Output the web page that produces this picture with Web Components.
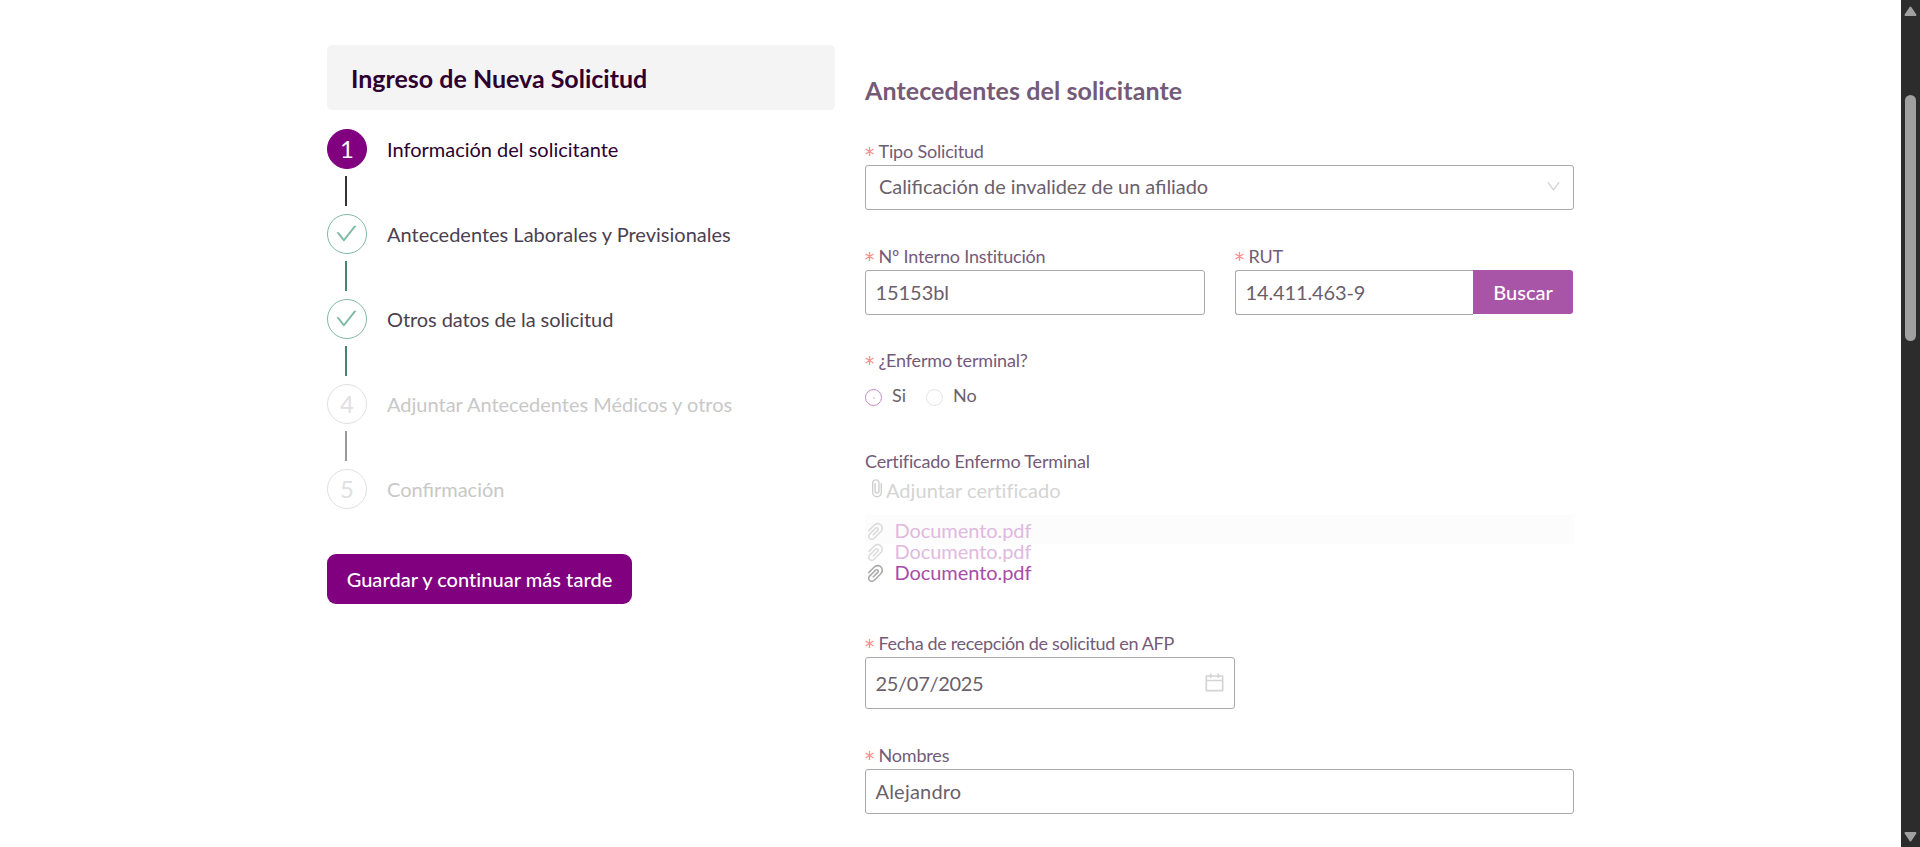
<!DOCTYPE html>
<html lang="es">
<head>
<meta charset="utf-8">
<title>Ingreso de Nueva Solicitud</title>
<style>
html,body{margin:0;height:100%;overflow:hidden;background:#fff}
body{font-family:Lato,sans-serif;font-size:20px;line-height:24px;color:#6b5f6b;font-variant-ligatures:none}
.fi{font-feature-settings:"liga" 1}
</style>
</head>
<body>
<app-page>
  <step-panel slot="aside" heading="Ingreso de Nueva Solicitud">
    <step-item n="1" state="active">Información del solicitante</step-item>
    <step-item n="2" state="done">Antecedentes Laborales y Previsionales</step-item>
    <step-item n="3" state="done" style="letter-spacing:-.08px">Otros datos de la solicitud</step-item>
    <step-item class="fi" n="4" state="wait">Adjuntar Antecedentes Médicos y otros</step-item>
    <step-item class="fi" n="5" state="wait" last>Confirmación</step-item>
    <save-button slot="action">Guardar y continuar más tarde</save-button>
  </step-panel>
  <form-section heading="Antecedentes del solicitante">
    <form-field label="Tipo Solicitud" required style="margin-bottom:35px"><text-box class="fi" icon="down" style="--pad:13px;--pb:4px;letter-spacing:-.06px">Calificación de invalidez de un afiliado</text-box></form-field>
    <form-row style="margin-bottom:34px">
      <form-field label="Nº Interno Institución" required><text-box style="letter-spacing:-.06px">15153bl</text-box></form-field>
      <form-field label="RUT" required><search-box action="Buscar">14.411.463-9</search-box></form-field>
    </form-row>
    <form-field label="¿Enfermo terminal?" required style="margin-bottom:41px"><radio-group><radio-option tone="on">Si</radio-option><radio-option>No</radio-option></radio-group></form-field>
    <form-field label="Certificado Enfermo Terminal" style="margin-bottom:51px">
      <attach-list label="Adjuntar certificado"><file-item faded boxed>Documento.pdf</file-item><file-item faded>Documento.pdf</file-item><file-item>Documento.pdf</file-item></attach-list>
    </form-field>
    <form-field label="Fecha de recepción de solicitud en AFP" required style="width:370px;margin-bottom:35px;--ls:-.34px"><text-box icon="calendar" style="--h:52px;--pb:0px;letter-spacing:-.3px">25/07/2025</text-box></form-field>
    <form-field label="Nombres" required><text-box style="letter-spacing:.2px">Alejandro</text-box></form-field>
  </form-section>
  <scroll-rail slot="rail"></scroll-rail>
</app-page>
<script>
const ICONS = {
  check:'M912 190h-69.9c-9.8 0-19.1 4.5-25.1 12.2L404.7 724.5 207 474a32 32 0 00-25.1-12.2H112c-6.7 0-10.4 7.7-6.3 12.9l273.9 347c12.8 16.2 37.4 16.2 50.3 0l488.4-618.9c4.1-5.1.4-12.8-6.3-12.8z',
  down:'M884 256h-75c-5.1 0-9.9 2.5-12.9 6.6L512 654.2 227.9 262.6c-3-4.1-7.8-6.6-12.9-6.6h-75c-6.5 0-10.3 7.4-6.5 12.7l352.6 486.1c12.8 17.6 39 17.6 51.7 0l352.6-486.1c3.9-5.3.1-12.7-6.4-12.7z',
  calendar:'M880 184H712v-64c0-4.4-3.6-8-8-8h-56c-4.4 0-8 3.6-8 8v64H384v-64c0-4.4-3.6-8-8-8h-56c-4.4 0-8 3.6-8 8v64H144c-17.7 0-32 14.3-32 32v664c0 17.7 14.3 32 32 32h736c17.7 0 32-14.3 32-32V216c0-17.7-14.3-32-32-32zm-40 656H184V460h656v380zM184 392V256h128v48c0 4.4 3.6 8 8 8h56c4.4 0 8-3.6 8-8v-48h256v48c0 4.4 3.6 8 8 8h56c4.4 0 8-3.6 8-8v-48h128v136H184z',
  clip:'M779.3 196.6c-94.2-94.2-247.6-94.2-341.7 0l-261 260.8c-1.7 1.7-2.6 4-2.6 6.4s.9 4.7 2.6 6.4l36.9 36.9a9 9 0 0012.7 0l261-260.8c32.4-32.4 75.5-50.2 121.3-50.2s88.9 17.8 121.2 50.2c32.4 32.4 50.2 75.5 50.2 121.2 0 45.8-17.8 88.8-50.2 121.2l-266 265.9-43.1 43.1c-40.3 40.3-105.8 40.3-146.1 0-19.5-19.5-30.2-45.4-30.2-73s10.7-53.5 30.2-73l263.9-263.8c6.7-6.6 15.5-10.3 24.9-10.3h.1c9.4 0 18.1 3.7 24.7 10.3 6.7 6.7 10.3 15.5 10.3 24.9 0 9.3-3.7 18.1-10.3 24.7L372.4 653c-1.7 1.7-2.6 4-2.6 6.4s.9 4.7 2.6 6.4l36.9 36.9a9 9 0 0012.7 0l215.6-215.6c19.9-19.9 30.8-46.3 30.8-74.4s-11-54.6-30.8-74.4c-41.1-41.1-107.9-41-149 0L463 364 224.8 602.1A172.22 172.22 0 00174 724.8c0 46.3 18.1 89.8 50.8 122.5 33.9 33.8 78.3 50.7 122.7 50.7 44.4 0 88.8-16.9 122.6-50.7l309.2-309C824.8 492.7 850 432 850 367.5c.1-64.6-25.1-125.3-70.7-170.9z'
};
const icon = (n, s) => `<svg class="icon" width="${s}" height="${s}" viewBox="0 0 1024 1024" fill="currentColor"><path d="${ICONS[n]}"/></svg>`;
const define = (name, render) => customElements.define(name, class extends HTMLElement {
  connectedCallback() {
    if (this.shadowRoot) return;
    this.attachShadow({mode:'open'}).innerHTML = render(this);
  }
});

define('app-page', () => `<style>
:host{display:grid;grid-template-columns:508px 30px 709px 1fr 19px;padding-left:327px;height:847px;box-sizing:border-box}
.a{grid-column:1;padding-top:45px}.m{grid-column:3;padding-top:75px}.r{grid-column:5}
</style><div class="a"><slot name="aside"></slot></div><div class="m"><slot></slot></div><div class="r"><slot name="rail"></slot></div>`);

define('step-panel', el => `<style>
:host{display:block}
h1{margin:0 0 19px;height:65px;box-sizing:border-box;padding:18px 24px 0;background:#f4f4f4;border-radius:5px;font-size:25px;line-height:30px;font-weight:700;color:#2d0030}
.b{margin-top:45px}
</style><h1>${el.getAttribute('heading')}</h1><slot></slot><div class="b"><slot name="action"></slot></div>`);

define('step-item', el => {
  const s = el.getAttribute('state');
  const c = {active:['#800080','#2d0030','#333'],done:['#7fb9a5','#4b3f50','#438570'],wait:['#e0e0e0','#c8c8c8','#999']}[s];
  return `<style>
:host{display:grid;grid-template-columns:40px 1fr;column-gap:20px}
.c{box-sizing:border-box;width:40px;height:40px;border:1px solid ${c[0]};border-radius:50%;display:flex;align-items:center;justify-content:center;font-size:24px;color:${s==='active'?'#fff':c[0]};background:${s==='active'?c[0]:'#fff'}}
.t{padding-top:8px;color:${c[1]};white-space:nowrap}
.l{width:2px;height:30px;margin:7px 0 8px 18px;background:${c[2]}}
.c .icon{margin:-1px 1px 0 0}
</style><div class="c">${s==='done'?icon('check',25):el.getAttribute('n')}</div><div class="t"><slot></slot></div>${el.hasAttribute('last')?'':'<div class="l"></div>'}`;
});

define('save-button', () => `<style>
:host{display:block}
button{display:block;width:305px;height:50px;border:0;border-radius:9px;padding:0;background:#800080;color:#fff;font:500 20px/24px Lato,sans-serif;font-variant-ligatures:none;letter-spacing:.03px;white-space:nowrap}
</style><button><slot></slot></button>`);

define('form-section', el => `<style>
:host{display:block}
h2{margin:0 0 35px;font-size:25px;line-height:30px;font-weight:700;letter-spacing:.09px;color:#755a78}
</style><h2>${el.getAttribute('heading')}</h2><slot></slot>`);

define('form-row', () => `<style>:host{display:grid;grid-template-columns:340px 339px;column-gap:30px}</style><slot></slot>`);

define('form-field', el => `<style>
:host{display:block}
.l{display:flex;align-items:center;height:22px;margin-bottom:3px;font-size:18px;line-height:22px;letter-spacing:var(--ls,-.18px);color:#755a78;white-space:nowrap}
.s{width:9px;height:9px;margin:1px 4.5px 0 0;stroke:#ff8f8f;stroke-width:1.3;fill:none}
</style><div class="l">${el.hasAttribute('required')?'<svg class="s" viewBox="0 0 9 9"><path d="M4.5 0v9M.5 2l8 5M8.5 2l-8 5"/></svg>':''}<span>${el.getAttribute('label')}</span></div><slot></slot>`);

const BOX = `box-sizing:border-box;height:var(--h,45px);border:1px solid #a9a9a9;border-radius:3px;display:flex;align-items:center;padding:0 13px var(--pb,2px) var(--pad,9.5px);white-space:nowrap;`;
define('text-box', el => {
  const i = el.getAttribute('icon');
  return `<style>:host{${BOX}}.v{flex:1}.icon{color:#d4d4d4;display:block;${i==='down'?'margin:2px -2px 0 0':'margin:-1px -5px 0 0'}}</style><div class="v"><slot></slot></div>${i?icon(i,i==='down'?17:23):''}`;
});

define('search-box', el => `<style>
:host{display:flex}
.i{${BOX}width:238px;border-right:0;border-radius:3px 0 0 3px;letter-spacing:-.12px}
button{width:100px;height:44px;border:0;border-radius:0 3px 3px 0;background:#a855a8;color:#fff;font:500 20px/24px Lato,sans-serif;padding:0}
</style><div class="i"><slot></slot></div><button>${el.getAttribute('action')}</button>`);

define('radio-group', () => `<style>:host{display:flex;gap:20px;padding-top:11px;height:24px}</style><slot></slot>`);
define('radio-option', el => `<style>
:host{display:flex;gap:10px;font-size:18px;line-height:20px}
i{box-sizing:border-box;width:17px;height:17px;margin-top:4px;border:1px solid ${el.getAttribute('tone')==='on'?'#c88cc8':'#e4e4e4'};border-radius:50%;display:grid;place-items:center}
b{width:2px;height:2px;border-radius:1px;background:#e3cbe3}
</style><i>${el.getAttribute('tone')==='on'?'<b></b>':''}</i><span><slot></slot></span>`);

define('attach-list', el => `<style>
:host{display:block}
.u{display:flex;height:24px;padding:3px 0 13px 7px;color:#d4d4d4;letter-spacing:.05px}
.u svg{margin:0 4px 0 0;stroke:#d0d0d0;fill:none;stroke-width:1.4}
</style><div class="u"><svg width="10" height="20" viewBox="0 0 10 20"><path d="M9.3 5v9.5a4.3 4.3 0 0 1-8.6 0V4.5a3.2 3.2 0 0 1 6.3 0v9a2 2 0 0 1-3.9 0V5"/></svg><span>${el.getAttribute('label')}</span></div><slot></slot>`);

define('file-item', el => {
  const f = el.hasAttribute('faded'), b = el.hasAttribute('boxed');
  return `<style>
:host{display:flex;height:21px;${b?'height:26px;padding-top:3px;margin-bottom:-5px;background:#fcfcfc;':''}letter-spacing:-.06px;color:${f?'#e0b8e0':'#a84ca8'}}
.icon{margin:2px 8px 0 -1.5px;color:${f?'#dcdcdc':'#aaa'};flex:none}
</style>${icon('clip',23)}<span><slot></slot></span>`;
});

define('scroll-rail', () => `<style>
:host{display:flex;flex-direction:column;align-items:center;height:847px;background:#2c2c2c}
.t{width:11px;height:246px;border-radius:6px;background:#a0a0a0;margin:79px 0 auto}
svg{fill:#a0a0a0;stroke:#a0a0a0;stroke-width:2;stroke-linejoin:round;display:block}
.u{margin-top:6px}.d{margin-bottom:5px}
</style><svg class="u" width="13" height="10" viewBox="0 0 13 10"><path d="M6.5 1.5 11.5 9H1.5z"/></svg><div class="t"></div><svg class="d" width="13" height="10" viewBox="0 0 13 10"><path d="M6.5 8.5 11.5 1H1.5z"/></svg>`);
</script>
</body>
</html>
